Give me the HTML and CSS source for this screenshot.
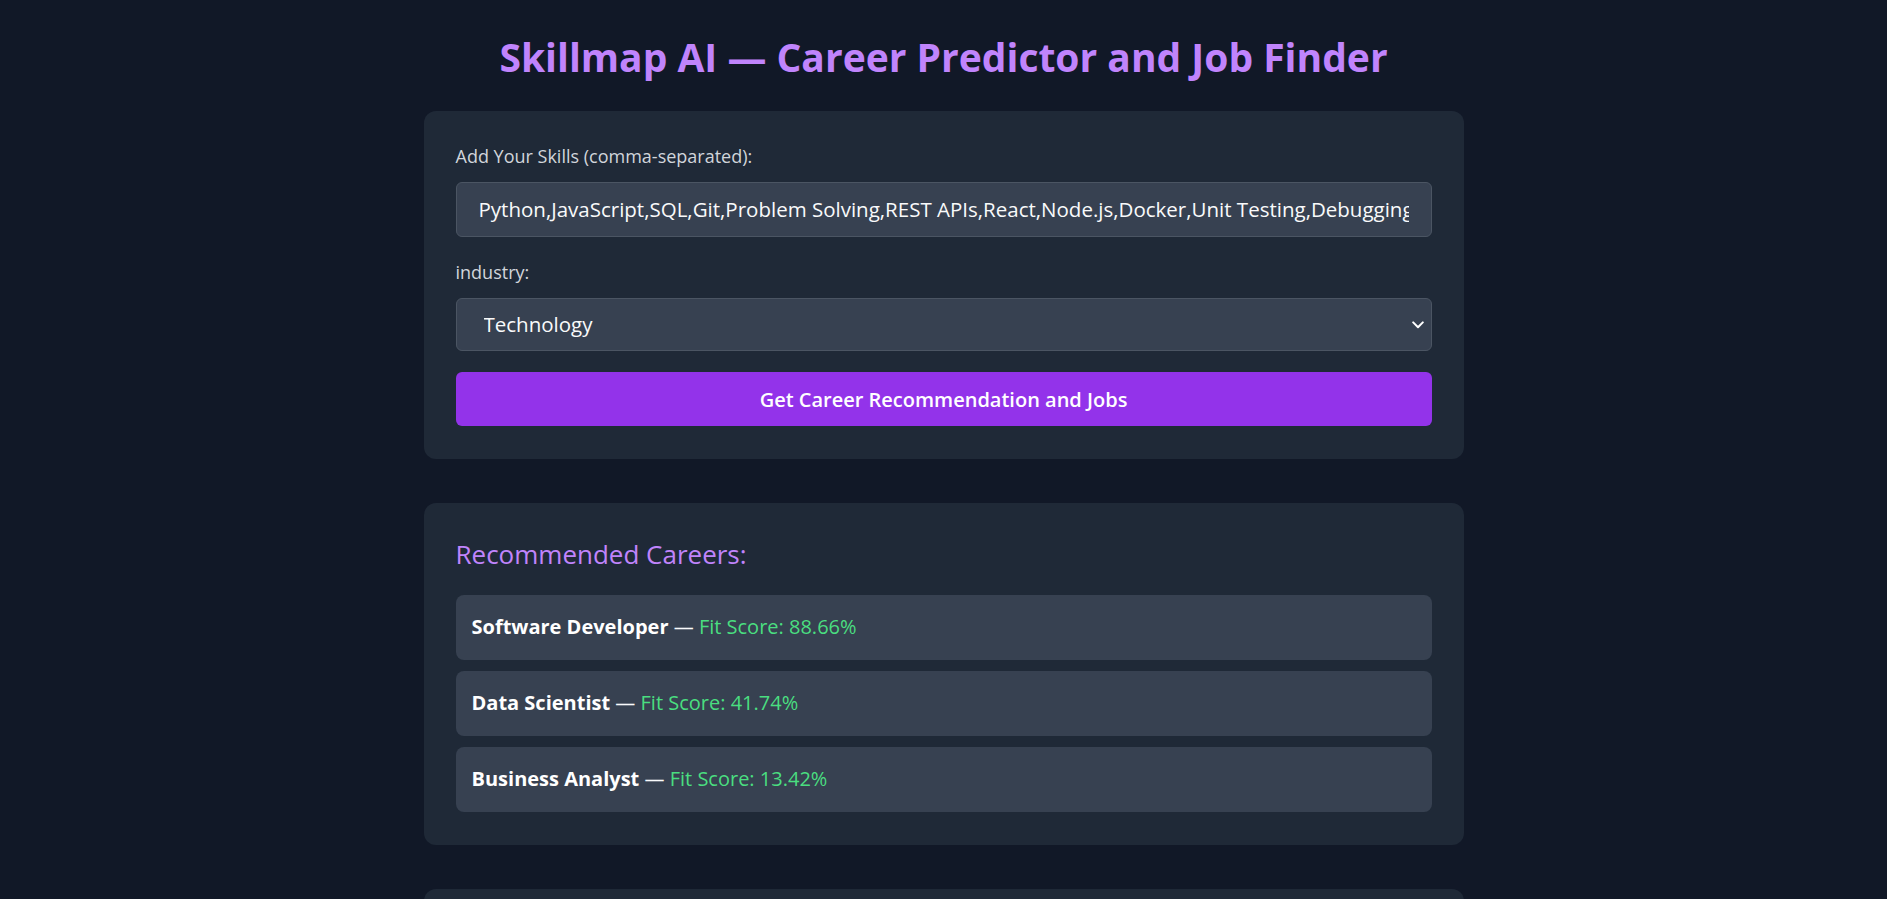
FILE: index.html
```html
<!DOCTYPE html>
<html lang="en">
<head>
<meta charset="utf-8">
<title>Skillmap AI — Career Predictor and Job Finder</title>
<link rel="stylesheet" href="styles.css">
</head>
<body>
<main class="page">
  <h1 class="title">Skillmap AI — Career Predictor and Job Finder</h1>

  <section class="card form-card">
    <label class="field-label" for="skills">Add Your Skills (comma-separated):</label>
    <input id="skills" class="text-input" type="text" value="Python,JavaScript,SQL,Git,Problem Solving,REST APIs,React,Node.js,Docker,Unit Testing,Debugging,Agile">

    <label class="field-label" for="industry">industry:</label>
    <div class="select-wrap">
      <select id="industry" class="select-input">
        <option>Technology</option>
        <option>Finance</option>
        <option>Healthcare</option>
      </select>
      <svg class="select-chevron" width="12" height="8" viewBox="0 0 12 8" aria-hidden="true">
        <path d="M1.2 1.4 L6 6.2 L10.8 1.4" fill="none" stroke="#ffffff" stroke-width="2" stroke-linecap="round" stroke-linejoin="round"/>
      </svg>
    </div>

    <button class="primary-btn" type="button">Get Career Recommendation and Jobs</button>
  </section>

  <section class="card results-card">
    <h2 class="section-title">Recommended Careers:</h2>
    <ul class="career-list">
      <li class="career-item"><strong class="career-name">Software Developer</strong> — <span class="fit">Fit Score: 88.66%</span></li>
      <li class="career-item"><strong class="career-name">Data Scientist</strong> — <span class="fit">Fit Score: 41.74%</span></li>
      <li class="career-item"><strong class="career-name">Business Analyst</strong> — <span class="fit">Fit Score: 13.42%</span></li>
    </ul>
  </section>

  <section class="card results-card">
    <h2 class="section-title">Matching Jobs:</h2>
    <ul class="career-list">
      <li class="career-item"><strong class="career-name">Software Developer</strong> — <span class="fit">Remote</span></li>
    </ul>
  </section>
</main>
</body>
</html>
```
FILE: styles.css
```css
* { box-sizing: border-box; }

html, body {
  margin: 0;
  padding: 0;
  background: #111827;
}

body {
  font-family: "Open Sans", "Noto Sans", Arial, sans-serif;
  color: #f3f4f6;
}

.page {
  max-width: 1040px;
  margin: 0 auto;
  padding-top: 30px;
  padding-bottom: 40px;
}

.title {
  margin: 0 0 28px;
  text-align: center;
  font-size: 39px;
  line-height: 53px;
  font-weight: 700;
  color: #c084fc;
}

.card {
  background: #1f2937;
  border-radius: 12px;
  padding: 32px 32px 33px;
  margin-bottom: 44px;
}

.form-card {
  display: flex;
  flex-direction: column;
}

.field-label {
  display: block;
  font-size: 18px;
  line-height: 27px;
  color: #d1d5db;
  margin-bottom: 11.5px;
}

.text-input,
.select-input {
  width: 100%;
  background: #374151;
  border: 1px solid #4b5563;
  border-radius: 6px;
  color: #f9fafb;
  font-family: "Open Sans", "Noto Sans", Arial, sans-serif;
  font-size: 20.5px;
  outline: none;
}

.text-input {
  height: 55px;
  padding: 0 22px;
  margin-bottom: 22.5px;
}

.select-wrap {
  position: relative;
  margin-bottom: 21.5px;
}

.select-input {
  display: block;
  height: 53px;
  padding: 0 40px 0 27px;
  appearance: none;
  -webkit-appearance: none;
}

.select-chevron {
  position: absolute;
  right: 8px;
  top: 23px;
  pointer-events: none;
}

.primary-btn {
  width: 100%;
  height: 54px;
  border: none;
  border-radius: 6px;
  background: #9333ea;
  color: #ffffff;
  font-family: "Open Sans", "Noto Sans", Arial, sans-serif;
  font-size: 20px;
  font-weight: 600;
  cursor: pointer;
}

.section-title {
  margin: 0 0 22px;
  font-size: 26px;
  line-height: 38px;
  font-weight: 400;
  color: #c084fc;
}

.career-list {
  list-style: none;
  margin: 0;
  padding: 0;
  display: flex;
  flex-direction: column;
  gap: 11.5px;
}

.career-item {
  background: #374151;
  border-radius: 8px;
  padding: 18px 16px 18.5px;
  font-size: 20px;
  line-height: 28px;
  color: #f9fafb;
}

.career-name {
  font-weight: 700;
  color: #ffffff;
}

.fit {
  color: #4ade80;
}
```
